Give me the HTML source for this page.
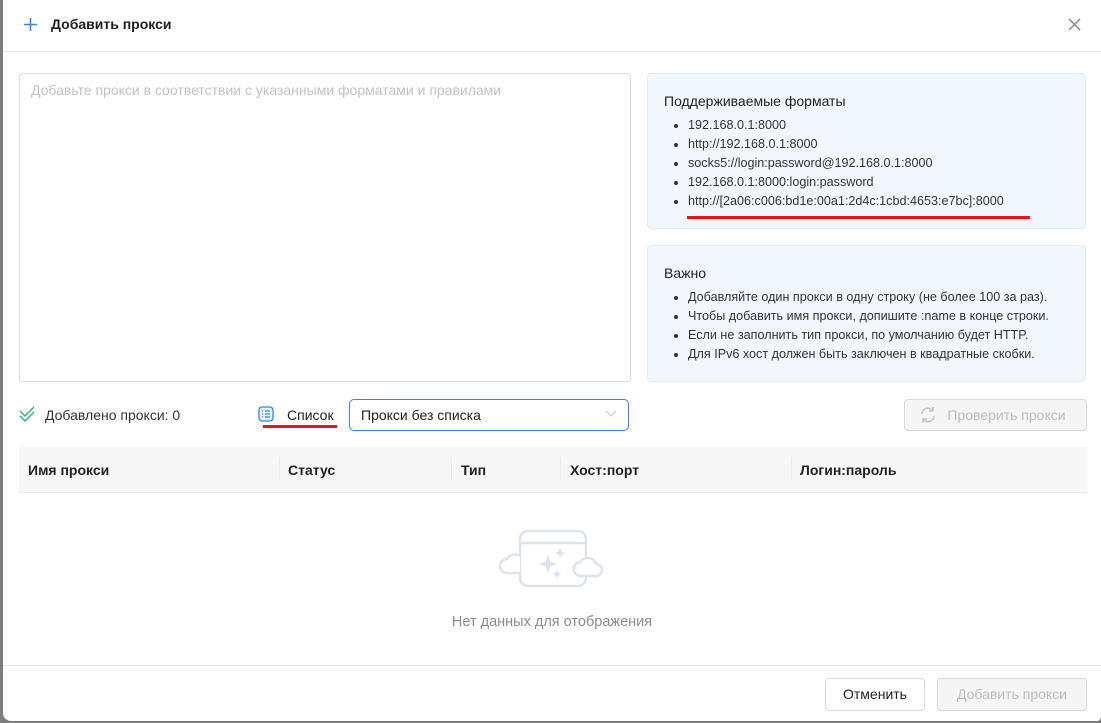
<!DOCTYPE html>
<html><head><meta charset="utf-8"><style>
*{box-sizing:border-box;margin:0;padding:0}
body{width:1101px;height:723px;background:#7d7d7d;font-family:"Liberation Sans",sans-serif;position:relative;overflow:hidden;color:#1f1f1f}
.modal{position:absolute;left:3px;top:0;width:1098px;height:721px;background:#fff;border-radius:0 0 4px 8px}
.a{position:absolute}
.hdr{left:0;top:0;width:100%;height:52px;border-bottom:1px solid #e8e8e8}
.ta{left:16px;top:73px;width:612px;height:309px;border:1px solid #dcdcdc;border-radius:4px;padding:8px 11px;color:#c2c2c2;font-size:14px}
.box{background:#f2f7fe;border:1px solid #e3ecf8;border-radius:4px;left:644px;width:439px;padding:19px 16px}
.box h3{font-weight:normal;font-size:14px;color:#222;margin-bottom:7px}
.box ul{padding-left:24px;font-size:12.6px;color:#333;line-height:19px}
.btn{border:1px solid #d9d9d9;border-radius:4px;font-size:14px;text-align:center}
.th{position:absolute;top:462px;font-size:14px;font-weight:bold;color:#222}
.sep{position:absolute;top:457px;width:1px;height:24px;background:#ececec}
</style></head><body>
<div class="modal">
 <div class="a hdr"></div>
 <svg class="a" style="left:20px;top:17px" width="15" height="15"><path d="M7.5 1v13M1 7.5h13" stroke="#3b82f6" stroke-width="1.6"/></svg>
 <div class="a" style="left:48px;top:16px;font-size:14px;font-weight:bold">Добавить прокси</div>
 <svg class="a" style="left:1065px;top:18px" width="13" height="13"><path d="M1 1l11 11M12 1L1 12" stroke="#8a8a8a" stroke-width="1.5"/></svg>

 <div class="a ta">Добавьте прокси в соответствии с указанными форматами и правилами</div>

 <div class="a box" style="top:73px;height:156px">
  <h3>Поддерживаемые форматы</h3>
  <ul><li>192.168.0.1:8000</li><li>http://192.168.0.1:8000</li><li>socks5://login:password@192.168.0.1:8000</li><li>192.168.0.1:8000:login:password</li><li>http://[2a06:c006:bd1e:00a1:2d4c:1cbd:4653:e7bc]:8000</li></ul>
 </div>
 <div class="a" style="left:684px;top:216px;width:343px;height:3px;background:#e8141b"></div>
 <div class="a box" style="top:245px;height:137px">
  <h3>Важно</h3>
  <ul><li>Добавляйте один прокси в одну строку (не более 100 за раз).</li><li>Чтобы добавить имя прокси, допишите :name в конце строки.</li><li>Если не заполнить тип прокси, по умолчанию будет HTTP.</li><li>Для IPv6 хост должен быть заключен в квадратные скобки.</li></ul>
 </div>

 <svg class="a" style="left:15px;top:405px" width="18" height="18"><path d="M2 6l5 5 9-9M2 11l5 5 9-9" stroke="#2ab27b" stroke-width="1.4" fill="none"/></svg>
 <div class="a" style="left:42px;top:407px;font-size:14px;color:#333">Добавлено прокси: 0</div>
 <svg class="a" style="left:255px;top:406px" width="16" height="16"><rect x="1" y="1" width="14" height="14" rx="3" fill="#e7effd" stroke="#3b7ff2" stroke-width="1.3"/><path d="M4 5h1M7 5h5M4 8h1M7 8h5M4 11h1M7 11h5" stroke="#3b7ff2" stroke-width="1.3"/></svg>
 <div class="a" style="left:284px;top:407px;font-size:14px;color:#222">Список</div>
 <div class="a" style="left:260px;top:425px;width:74px;height:3px;background:#e8141b"></div>
 <div class="a" style="left:346px;top:399px;width:280px;height:32px;border:1px solid #3b7ff2;border-radius:5px;padding:7px 11px;font-size:14px;color:#222">Прокси без списка</div>
 <svg class="a" style="left:602px;top:410px" width="12" height="8"><path d="M1 1l5 5 5-5" stroke="#c4c4c4" fill="none"/></svg>
 <div class="a btn" style="left:901px;top:399px;width:183px;height:32px;background:#f5f5f5;color:#bdbdbd;padding-top:7px;padding-left:22px">Проверить прокси</div>
 <svg class="a" style="left:915px;top:405px" width="20" height="20"><path d="M4 9a6 6 0 0 1 11-3M16 11a6 6 0 0 1-11 3" stroke="#c4c4c4" stroke-width="1.5" fill="none"/><path d="M15 2v4h-4M5 18v-4h4" stroke="#c4c4c4" stroke-width="1.5" fill="none"/></svg>

 <div class="a" style="left:16px;top:447px;width:1068px;height:46px;background:#f7f7f7;border-bottom:1px solid #ebebeb"></div>
 <div class="th" style="left:25px">Имя прокси</div>
 <div class="sep" style="left:276px"></div><div class="th" style="left:285px">Статус</div>
 <div class="sep" style="left:448px"></div><div class="th" style="left:458px">Тип</div>
 <div class="sep" style="left:557px"></div><div class="th" style="left:567px">Хост:порт</div>
 <div class="sep" style="left:788px"></div><div class="th" style="left:797px">Логин:пароль</div>

 <svg class="a" style="left:496px;top:528px" width="110" height="62" fill="none" stroke="#dde3ee" stroke-width="2.5">
  <rect x="21" y="3" width="66" height="55" rx="8" fill="#fff"/><path d="M21 15h66"/>
  <path d="M21 45h-13a7 7 0 0 1 0-14a9 9 0 0 1 13-3" fill="#fff"/>
  <path d="M83 48h14a6 6 0 0 0 0-12a9 9 0 0 0-16-2a7 7 0 0 0 2 14z" fill="#fff"/>
  <path d="M47 34l2-6 2 6 6 2-6 2-2 6-2-6-6-2z" fill="#dde3ee" stroke-width="1"/>
  <path d="M60 24l1-3 1 3 3 1-3 1-1 3-1-3-3-1z" fill="#dde3ee" stroke-width="1"/>
  <path d="M57 45l1-2 1 2 2 1-2 1-1 2-1-2-2-1z" fill="#dde3ee" stroke-width="1"/>
 </svg>
 <div class="a" style="left:0;width:1098px;text-align:center;top:614px;font-size:14.5px;color:#8c8c8c">Нет данных для отображения</div>

 <div class="a" style="left:0;top:665px;width:100%;height:1px;background:#e8e8e8"></div>
 <div class="a btn" style="left:822px;top:678px;width:100px;height:33px;padding-top:7px;color:#222">Отменить</div>
 <div class="a btn" style="left:934px;top:678px;width:150px;height:33px;padding-top:7px;background:#f5f5f5;color:#bdbdbd">Добавить прокси</div>
</div>
</body></html>
